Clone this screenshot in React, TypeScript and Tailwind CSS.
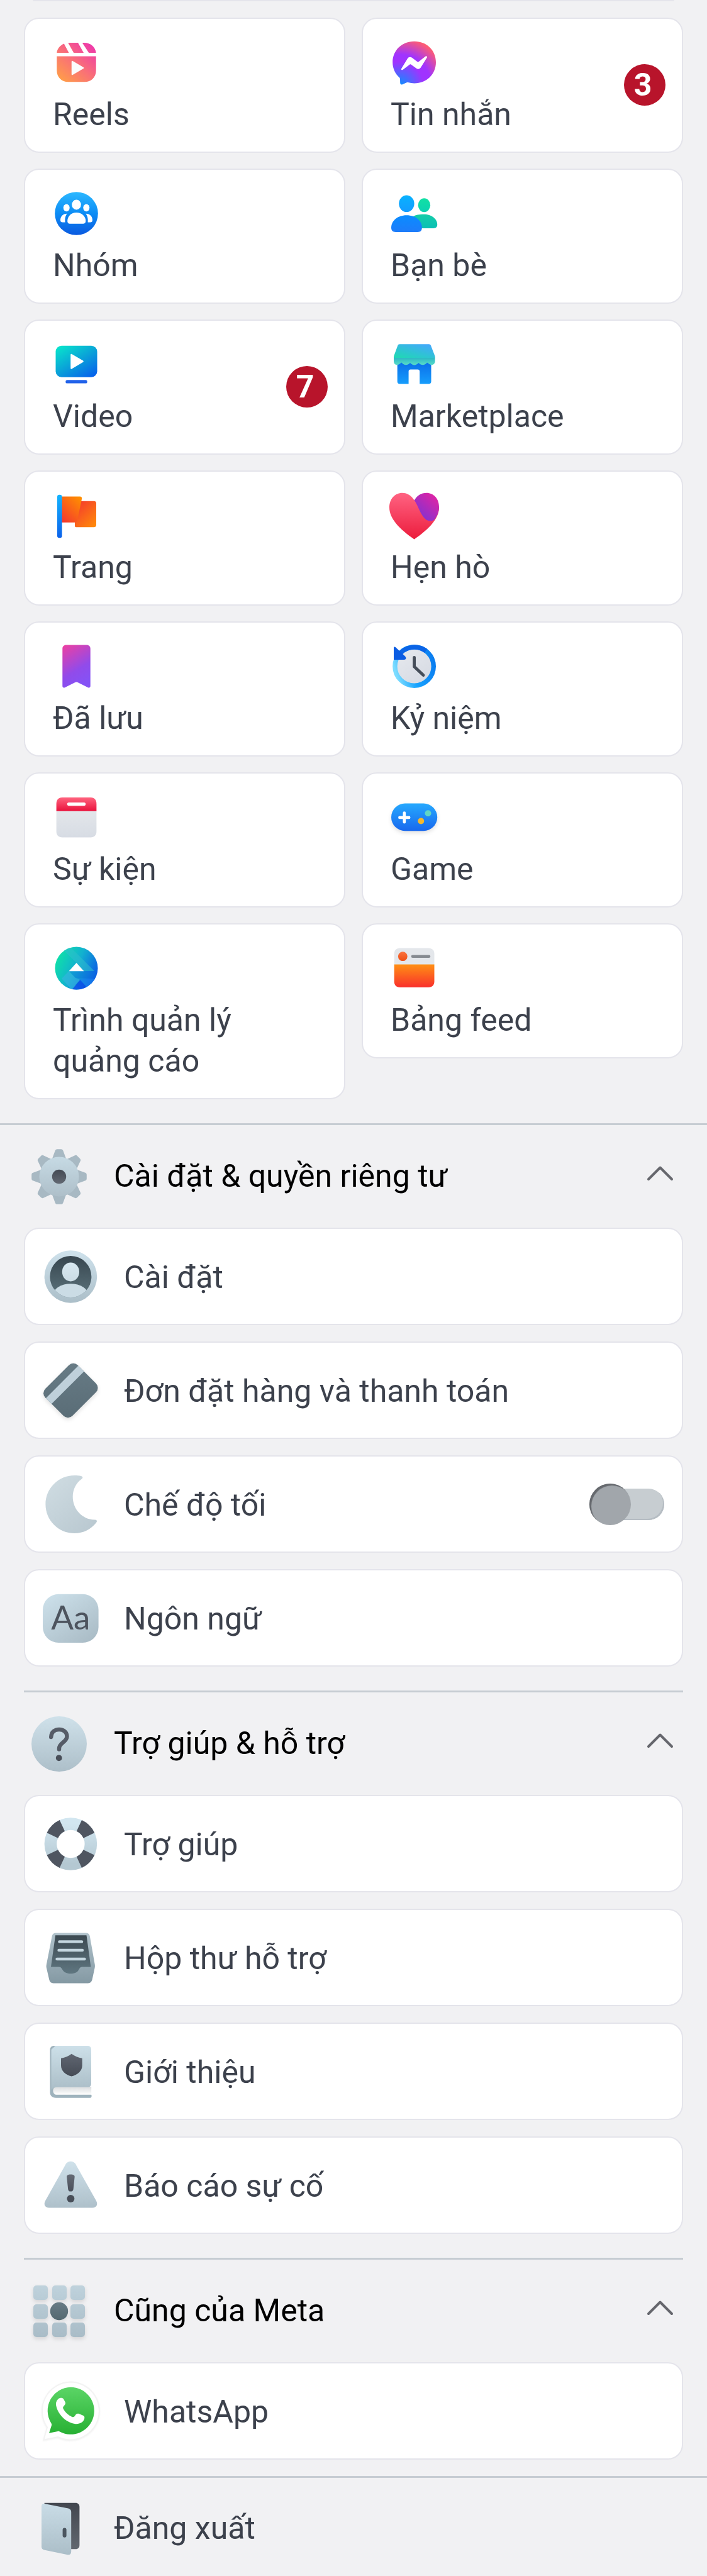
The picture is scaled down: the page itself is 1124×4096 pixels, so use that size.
import type { ReactNode } from "react";

type GradProps = { id: string; from: string; to: string; mid?: string; diag?: "v" | "up" | "down" };

function Grad({ id, from, to, mid, diag = "v" }: GradProps) {
  const pos = {
    v: { x1: 0, y1: 0, x2: 0, y2: 1 },
    up: { x1: 0.1, y1: 1, x2: 0.9, y2: 0 },
    down: { x1: 0.1, y1: 0, x2: 0.9, y2: 1 },
  }[diag];
  return (
    <linearGradient id={id} {...pos}>
      <stop offset="0" stopColor={from} />
      {mid && <stop offset="0.5" stopColor={mid} />}
      <stop offset="1" stopColor={to} />
    </linearGradient>
  );
}

function TileIcon({ children }: { children: ReactNode }) {
  return (
    <svg viewBox="0 0 76 76" className="block size-[76px] overflow-visible" aria-hidden="true">
      {children}
    </svg>
  );
}

function RowIcon({ children }: { children: ReactNode }) {
  return (
    <svg viewBox="0 0 88 88" className="block size-[88px] shrink-0 overflow-visible" aria-hidden="true">
      {children}
    </svg>
  );
}

const ReelsIcon = (
  <TileIcon>
    <defs>
      <linearGradient id="reels" gradientUnits="userSpaceOnUse" x1="12" y1="68" x2="62" y2="8">
        <stop offset="0" stopColor="#ffa046" />
        <stop offset="0.5" stopColor="#f96f78" />
        <stop offset="1" stopColor="#ee38ab" />
      </linearGradient>
    </defs>
    <path
      fill="url(#reels)"
      d="M6.3 22C7 15.500 11.500 10 17.800 7.500L25.500 22ZM24.200 6H40L49 22H33.200ZM46.800 6H50C60 6 67.500 12.500 68.700 22H57.200ZM6.300 27.500H68.700V50C68.700 61 61 68.300 50.500 68.300H24.500C14 68.300 6.300 61 6.300 50Z"
    />
    <path d="M31 36L48 46L31 56Z" fill="#fbfbfc" stroke="#fbfbfc" strokeWidth="2.500" strokeLinejoin="round" />
  </TileIcon>
);

const MessengerIcon = (
  <TileIcon>
    <defs>
      <radialGradient id="msgr" gradientUnits="userSpaceOnUse" cx="15" cy="74" r="76">
        <stop offset="0" stopColor="#0a90ff" />
        <stop offset="0.500" stopColor="#a033ff" />
        <stop offset="0.650" stopColor="#a033ff" />
        <stop offset="1" stopColor="#ff5c72" />
      </radialGradient>
    </defs>
    <path
      fill="url(#msgr)"
      d="M37.600 3.700C18 3.700 3.200 18 3.200 37C3.200 47 7.500 55.500 14 61.200C14.700 62 14.900 63 15 64L15.200 70C15.300 72 17 73 18.800 72.200L25.500 69.300C26.200 69 27 68.900 27.700 69.100C31 70 34.200 70.500 37.600 70.500C57.200 70.500 72 56.200 72 37S57.200 3.700 37.600 3.700Z"
    />
    <path
      fill="#fff"
      d="M17.200 47L27 31C28.500 28.400 31.500 28 34 29.700L42.300 36C43 36.500 44 36.500 44.800 36L55.600 27.600C57 26.500 58.700 28 57.800 29.600L48 45.300C46.400 48 43.300 48.500 41 46.800L32.700 40.700C32 40.200 31 40.200 30.200 40.700L19.300 49C17.800 50 16.200 48.600 17.200 47Z"
    />
  </TileIcon>
);

const GroupsIcon = (
  <TileIcon>
    <defs>
      <Grad id="groups" from="#2cb8ff" mid="#0c8cf5" to="#0a5ae0" />
    </defs>
    <circle cx="37.500" cy="37.500" r="34.300" fill="url(#groups)" />
    <g fill="#fff">
      <ellipse cx="37.500" cy="23.500" rx="7.300" ry="7.900" />
      <ellipse cx="21.700" cy="28.300" rx="5" ry="5.900" />
      <ellipse cx="53.300" cy="28.300" rx="5" ry="5.900" />
      <path d="M37.500 36C29 36 23.200 42 23.200 49.500C23.200 52.300 24.500 53.700 27 53.700H48C50.500 53.700 52.300 52.300 52.300 49.500C52.300 42 46 36 37.500 36Z" />
      <path d="M22.600 37.700C16 37.700 12 42.500 12 48C12 50.500 13.200 51.500 15.500 51.500H19.600C19 46 19.500 42 22.600 37.700Z" />
      <path d="M52.400 37.700C59 37.700 63 42.500 63 48C63 50.500 61.800 51.500 59.500 51.500H55.600C56 46 55.500 42 52.400 37.700Z" />
    </g>
  </TileIcon>
);

const FriendsIcon = (
  <TileIcon>
    <defs>
      <Grad id="fr1" from="#08b2ff" to="#149cff" />
      <Grad id="fr2" from="#0a8cff" to="#1e7cfa" />
      <Grad id="fr3" from="#12e0a4" to="#0cd2b2" />
      <Grad id="fr4" from="#14cda8" to="#0abfb4" />
    </defs>
    <ellipse cx="53.400" cy="24.200" rx="9.700" ry="11" fill="url(#fr3)" />
    <path fill="url(#fr4)" d="M53 38.700C65 38.700 74.200 46 74.200 55C74.200 59 72 60.900 68 60.900H36V42C40 39.700 45 38.700 53 38.700Z" />
    <ellipse cx="25.400" cy="21.800" rx="12.200" ry="13.300" fill="url(#fr1)" />
    <path fill="url(#fr2)" d="M25.400 40.200C11 40.200 1 49 1 60C1 64.500 3.500 66.900 8 66.900H43C47.500 66.900 49.800 64.500 49.800 60C49.800 49 40 40.200 25.400 40.200Z" />
  </TileIcon>
);

const VideoIcon = (
  <TileIcon>
    <defs>
      <Grad id="vid" from="#08e4cc" mid="#0aa2d8" to="#0660ec" diag="down" />
    </defs>
    <rect x="4.500" y="7.700" width="66" height="50" rx="9.500" fill="url(#vid)" />
    <path d="M29.500 22L47.500 32.600L29.500 43.500Z" fill="#fff" stroke="#fff" strokeWidth="2.500" strokeLinejoin="round" />
    <rect x="20.300" y="62.300" width="34.400" height="5.200" rx="2.600" fill="#2162ea" />
  </TileIcon>
);

const PagesIcon = (
  <TileIcon>
    <defs>
      <Grad id="pole" from="#12b4ff" to="#0c62ea" />
      <Grad id="flag1" from="#f4392e" to="#ff9000" diag="up" />
      <Grad id="flag2" from="#f4392e" to="#ff8a0a" diag="down" />
    </defs>
    <path fill="url(#flag2)" d="M44 14.800H65.500C67.800 14.800 69 16 69 18.300V52.700C69 55 67.800 56.200 65.500 56.200H37C35.500 56.200 34.700 55 35 53.500V48.500Z" />
    <path fill="url(#flag1)" d="M14 7.600H43C45.500 7.600 46.500 9 46 11.500L39 45C38.400 47.700 37 48.700 34.500 48.700H14Z" />
    <rect x="7" y="4.800" width="7.600" height="68.400" rx="3.300" fill="url(#pole)" />
  </TileIcon>
);

const MarketIcon = (
  <TileIcon>
    <defs>
      <Grad id="mk1" from="#1fd8b4" to="#45a6ff" diag="up" />
      <Grad id="mk2" from="#0a6ce8" to="#169dfc" />
      <Grad id="mk3" from="#24b2c4" to="#58dcc8" />
    </defs>
    <path fill="url(#mk2)" d="M10.700 32H64.500V64.500C64.500 67.200 63 68.600 60.500 68.600H46.200V48.500C46.200 46.500 45 45.400 43 45.400H31.800C29.800 45.400 28.600 46.500 28.600 48.500V68.600H14.700C12.200 68.600 10.700 67.200 10.700 64.500Z" />
    <path
      fill="url(#mk3)"
      d="M5 25H70.600V32C70.600 37.500 66 39.500 62.500 37.500L58 34.500C54 39.500 49 39.500 44.500 35C40 39.500 35.500 39.500 31 35C26.500 39.500 21.500 39.500 17.500 34.500L13 37.500C9 39.500 5 37.500 5 32Z"
    />
    <path fill="url(#mk1)" d="M14.500 5.200H60.800C62.500 5.200 63.500 6 64 7.500L70.200 23.500C70.800 25.500 70.500 27 68 27H7.500C5.200 27 4.800 25.500 5.400 23.500L11.300 7.500C11.800 6 12.800 5.200 14.500 5.200Z" />
  </TileIcon>
);

const DatingIcon = (
  <TileIcon>
    <defs>
      <Grad id="ht1" from="#ff6382" to="#ec1c3c" />
      <Grad id="ht2" from="#7434d8" to="#e822a0" diag="up" />
    </defs>
    <path fill="url(#ht1)" d="M37.600 75.500C13 58.500-2 42-2 25C-2 11 7 1.700 18.500 1.700C27 1.700 33.500 6.500 37.600 13.600L77 25C77 42 62.200 58.500 37.600 75.500Z" />
    <path fill="url(#ht2)" d="M37.600 13.600C42 6 48.500 1.700 57 1.700C68.500 1.700 77 11 77 24C77 31.500 74.200 38 69.500 44.500C64 48 57 46.500 52.500 40.500C45.500 31.500 44 22.500 37.600 13.600Z" />
  </TileIcon>
);

const SavedIcon = (
  <TileIcon>
    <defs>
      <linearGradient id="saved" x1="0.100" y1="0" x2="0.500" y2="1">
        <stop offset="0" stopColor="#ea40a4" />
        <stop offset="0.650" stopColor="#914bea" />
        <stop offset="1" stopColor="#8552f5" />
      </linearGradient>
    </defs>
    <path fill="url(#saved)" d="M21.500 3.600H53.500C57.500 3.600 59.700 6 59.700 9.500V69C59.700 71 58 72 56 71.200L39.500 63C38.200 62.300 36.800 62.300 35.500 63L19 71.200C17 72 15.300 71 15.300 69V9.500C15.300 6 17.500 3.600 21.500 3.600Z" />
  </TileIcon>
);

const MemoriesIcon = (
  <TileIcon>
    <defs>
      <Grad id="memface" from="#e6e9ee" to="#d5d9e2" diag="down" />
      <linearGradient id="memring" x1="0" y1="0.600" x2="1" y2="0.300">
        <stop offset="0" stopColor="#7cdcff" />
        <stop offset="0.400" stopColor="#18a4ff" />
        <stop offset="1" stopColor="#0a7df0" />
      </linearGradient>
    </defs>
    <circle cx="37.600" cy="37.500" r="28" fill="url(#memface)" />
    <circle cx="37.600" cy="37.500" r="30.700" fill="none" stroke="url(#memring)" strokeWidth="7.400" />
    <path d="M13 19.500A30.700 30.700 0 0 1 56 13" fill="none" stroke="#0b64e6" strokeWidth="7.400" />
    <path d="M5 8.500C5 6.500 6.700 6 8 7.200L23 21.500C25.500 24 24.500 26.900 21.500 26.900H5Z" fill="#0b5ce2" />
    <path d="M37.600 23.500V38L52 51.500" fill="none" stroke="#454d59" strokeWidth="4.800" strokeLinecap="round" strokeLinejoin="round" />
  </TileIcon>
);

const EventsIcon = (
  <TileIcon>
    <defs>
      <Grad id="evt" from="#ff637e" to="#e9123c" />
      <Grad id="evb" from="#e3e6ea" to="#d7dce4" />
    </defs>
    <path fill="url(#evb)" d="M5.600 27H69.400V60C69.400 66 66 69.400 60 69.400H15C9 69.400 5.600 66 5.600 60Z" />
    <path fill="url(#evt)" d="M5.600 27.800V16C5.600 10 9 6 15 6H60C66 6 69.400 10 69.400 16V27.800Z" />
    <rect x="22.800" y="13.900" width="29.400" height="5.300" rx="2.600" fill="#fff" />
  </TileIcon>
);

const GameIcon = (
  <TileIcon>
    <defs>
      <Grad id="game" from="#26a9fe" to="#1868ee" />
    </defs>
    <g className="drop-shadow-md">
      <rect x="1" y="15.600" width="73.200" height="43.600" rx="21.800" fill="url(#game)" />
    </g>
    <path d="M21.800 30.500V45.300M14.400 37.900H29.200" stroke="#fff" strokeWidth="4.600" strokeLinecap="round" />
    <circle cx="59.500" cy="31.300" r="5" fill="#62d6c4" />
    <circle cx="48.300" cy="43.500" r="5" fill="#f5b82e" />
  </TileIcon>
);

const AdsIcon = (
  <TileIcon>
    <defs>
      <linearGradient id="ads" gradientUnits="userSpaceOnUse" x1="8" y1="24" x2="70" y2="54">
        <stop offset="0" stopColor="#0fdcac" />
        <stop offset="0.450" stopColor="#12b0d0" />
        <stop offset="1" stopColor="#0b55e6" />
      </linearGradient>
      <clipPath id="adsclip">
        <circle cx="37.500" cy="37.500" r="34" />
      </clipPath>
    </defs>
    <g clipPath="url(#adsclip)">
      <rect width="76" height="76" fill="url(#ads)" />
      <path d="M12 4L37.500 29L49.500 42H66L28 4Z" fill="#2fc0cc" opacity="0.550" />
      <path d="M25.500 42H66L72 53H36Z" fill="#0b74dc" opacity="0.350" />
      <path d="M25.500 42L14 54L34 76H46L36 64L43.400 56L36 53Z" fill="#3cb4e2" opacity="0.550" />
      <path d="M43.400 56L58 72H30Z" fill="#0a4fe8" opacity="0.850" />
      <path d="M43.400 56L58 72H72V54H45Z" fill="#1a84ee" opacity="0.600" />
    </g>
    <path d="M25.500 42.300L37.500 29L49.500 42.300Z" fill="#fff" />
  </TileIcon>
);

const FeedsIcon = (
  <TileIcon>
    <defs>
      <Grad id="feed" from="#ff9014" to="#f9302c" />
      <Grad id="feeddot" from="#fb7440" to="#ee4e14" />
    </defs>
    <path fill="#e4e7eb" d="M5.700 32V15C5.700 9 9 5.500 15 5.500H60C66 5.500 69.500 9 69.500 15V32Z" />
    <path fill="url(#feed)" d="M5.700 31.400H69.500V58.500C69.500 64.500 66 67.900 60 67.900H15C9 67.900 5.700 64.500 5.700 58.500Z" />
    <circle cx="19.300" cy="18.700" r="7.400" fill="url(#feeddot)" />
    <path d="M35 18.700H61" stroke="#858a90" strokeWidth="4.600" strokeLinecap="round" />
  </TileIcon>
);

const GearIcon = (
  <RowIcon>
    <defs>
      <Grad id="gear" from="#c6dae4" to="#aebfc9" />
      <Grad id="gearhole" from="#444a54" to="#626872" />
    </defs>
    <g fill="#a8b9c3">
      {[0, 45, 90, 135, 180, 225, 270, 315].map((angle) => (
        <path
          key={angle}
          d="M32 18L37.500 3C38.100 1 39.300 0.200 41 0.200H47C48.700 0.200 49.900 1 50.500 3L56 18Z"
          transform={`rotate(${angle} 44 44)`}
        />
      ))}
    </g>
    <circle cx="44" cy="44" r="31.500" fill="url(#gear)" />
    <circle cx="44" cy="44" r="11.200" fill="url(#gearhole)" />
  </RowIcon>
);

const AccountIcon = (
  <RowIcon>
    <defs>
      <Grad id="acc" from="#cfe2ec" to="#abbec8" />
      <Grad id="accd" from="#37464f" to="#5c737c" />
      <Grad id="acch" from="#d8e8f0" to="#cbdce5" />
      <clipPath id="accclip">
        <circle cx="44.400" cy="44" r="33" />
      </clipPath>
    </defs>
    <circle cx="44.400" cy="44" r="41.800" fill="url(#acc)" />
    <circle cx="44.400" cy="44" r="33" fill="url(#accd)" />
    <ellipse cx="44.400" cy="36.400" rx="13.600" ry="15" fill="url(#acch)" />
    <ellipse cx="44.400" cy="73" rx="28" ry="17.800" fill="#cbdce5" clipPath="url(#accclip)" />
  </RowIcon>
);

const CardIcon = (
  <RowIcon>
    <defs>
      <linearGradient id="ccard" x1="1" y1="0" x2="0" y2="1">
        <stop offset="0" stopColor="#687c86" />
        <stop offset="1" stopColor="#596c76" />
      </linearGradient>
    </defs>
    <g className="drop-shadow-md">
      <g transform="translate(44.300 44) rotate(-45)">
        <rect x="-36.500" y="-30.500" width="73" height="61" rx="10" fill="url(#ccard)" />
        <rect x="-36.500" y="-19.200" width="73" height="12.800" fill="#bfd0da" />
      </g>
    </g>
  </RowIcon>
);

const MoonIcon = (
  <RowIcon>
    <defs>
      <Grad id="moon" from="#cfdce2" to="#b9c8d0" diag="down" />
    </defs>
    <path fill="url(#moon)" d="M61 -1C64 0 64.200 2 61.500 4C52.500 10.500 47.700 21 47.700 32C47.700 52 63 68 82 68.500C86 68.500 87 70 85 73C77 83.500 64.500 90 50.400 90C25 90 4.400 69.500 4.400 44S25-2 50.400-2C54-2 58-1.800 61-1Z" />
  </RowIcon>
);

const LanguageIcon = (
  <RowIcon>
    <defs>
      <Grad id="lang" from="#cce0ea" to="#a9bbc5" diag="down" />
    </defs>
    <rect x="0" y="5.800" width="88.600" height="77.200" rx="25" fill="url(#lang)" />
    <text x="44.300" y="62" textAnchor="middle" fontSize="53" fill="#4d545e" className="font-[Lato,sans-serif]">
      Aa
    </text>
  </RowIcon>
);

const QuestionIcon = (
  <RowIcon>
    <defs>
      <Grad id="qst" from="#cfe1ea" to="#adbfc9" />
    </defs>
    <circle cx="44" cy="44" r="44" fill="url(#qst)" />
    <path d="M31.200 33C31.500 25 37 21 44 21C51.500 21 56.500 25.500 56.500 32C56.500 41 44 42 44 51V52.500" fill="none" stroke="#565c67" strokeWidth="6.400" strokeLinecap="round" />
    <circle cx="43.700" cy="66.300" r="4.900" fill="#484e58" />
  </RowIcon>
);

const LifebuoyIcon = (
  <RowIcon>
    <defs>
      <Grad id="buoy" from="#d2e6f0" to="#b4c8d2" />
    </defs>
    <circle cx="44.400" cy="44" r="32" fill="none" stroke="url(#buoy)" strokeWidth="19.600" />
    <circle cx="44.400" cy="44" r="32" fill="none" stroke="#4f5560" strokeWidth="19.600" pathLength="360" strokeDasharray="40 50" strokeDashoffset="-25" />
  </RowIcon>
);

const InboxIcon = (
  <RowIcon>
    <defs>
      <Grad id="inb" from="#b0c2cb" to="#8499a3" />
      <Grad id="inbd" from="#3c4951" to="#5f7680" />
    </defs>
    <path fill="url(#inb)" d="M21 4.400H68.500C72 4.400 74 6 74.800 9.500L82.800 55C83 57 83 58.500 82.500 60.500L78.500 79C77.500 82.500 75.500 84.400 72 84.400H16.800C13.300 84.400 11 82.500 10.300 79L6 60.500C5.500 58.500 5.500 57 5.800 55L14.700 9.500C15.500 6 17.500 4.400 21 4.400Z" />
    <path fill="url(#inbd)" d="M20.100 8.300H69.500L76.400 58.400H63C60 58.400 58.500 60 57.500 62.500C55.500 67 51 69.300 44.400 69.300S33.500 67 31 62.500C29.700 60 28.500 58.400 25.500 58.400H13Z" />
    <g stroke="#c4d6df" strokeWidth="4.400" strokeLinecap="round">
      <path d="M26.500 18.400H62" />
      <path d="M25.500 32H63" />
      <path d="M22.500 46H66.500" />
    </g>
  </RowIcon>
);

const BookIcon = (
  <RowIcon>
    <defs>
      <Grad id="book" from="#cde0e9" to="#aabdc7" />
      <Grad id="pages" from="#d9dcde" to="#ffffff" />
      <Grad id="shield" from="#606671" to="#454b55" />
    </defs>
    <path fill="#9fb3bd" d="M17.500 2.900H30V70H77V80.600C78 82 78 84.500 76 85.700H21C15 85.700 11.500 82 11.500 77V9C11.500 5.500 14 2.900 17.500 2.900Z" />
    <path fill="url(#pages)" d="M22 68H77.200V80.800H22C14.500 80.800 14.500 68 22 68Z" />
    <path fill="url(#book)" d="M20 2.900H71C75 2.900 77 5 77 9V63C77 66.700 75 68.800 71 68.800H24C19 68.800 15.500 70 13.500 73V9Z" />
    <path fill="url(#shield)" d="M45.800 15.800C51 19.500 56 21.500 62.700 22.800V34C62.700 43 55.500 49 45.800 51.500C36 49 29 43 29 34V22.800C35.500 21.500 41 19.500 45.800 15.800Z" />
  </RowIcon>
);

const WarningIcon = (
  <RowIcon>
    <defs>
      <Grad id="warn" from="#cfe1ea" to="#aec0ca" />
      <Grad id="bang" from="#646a74" to="#4a505b" />
    </defs>
    <path fill="url(#warn)" d="M44.400 5.700C48 5.700 50.500 7.300 52.300 10.300L85 68.500C88.200 74.300 85.200 79.500 79 79.500H10C3.700 79.500 0.800 74.300 4 68.500L36.500 10.300C38.300 7.300 40.800 5.700 44.400 5.700Z" />
    <path fill="url(#bang)" d="M44.400 26.500C49 26.500 51.200 28 50.600 31L48.600 50C48.200 52.500 47 53.600 44.400 53.600S40.600 52.500 40.200 50L38.200 31C37.600 28 39.800 26.500 44.400 26.500Z" />
    <circle cx="44.400" cy="64.900" r="6" fill="#484e58" />
  </RowIcon>
);

const GridIcon = (
  <RowIcon>
    <defs>
      <linearGradient id="cells" gradientUnits="userSpaceOnUse" x1="0" y1="3" x2="0" y2="85">
        <stop offset="0" stopColor="#bfd2dc" />
        <stop offset="1" stopColor="#a9bcc7" />
      </linearGradient>
      <Grad id="dot" from="#687b85" to="#546870" />
    </defs>
    <g fill="url(#cells)" className="drop-shadow-md">
      {[3, 33, 62].map((y) =>
        [3, 33, 62].map((x) => <rect key={`${x}-${y}`} x={x} y={y} width="23" height="23" rx="5" />),
      )}
    </g>
    <circle cx="44" cy="44" r="14.200" fill="url(#dot)" />
  </RowIcon>
);

const WhatsAppIcon = (
  <RowIcon>
    <defs>
      <Grad id="wa" from="#5bd566" to="#27b033" />
    </defs>
    <g className="drop-shadow-xs">
      <path
        fill="#fff"
        stroke="#f3f3f3"
        strokeWidth="2"
        d="M44.300 -2.500A46 46 0 1 1 24 85L1.500 89.500L7 69.500A46 46 0 0 1 44.300 -2.500Z"
      />
    </g>
    <path fill="url(#wa)" d="M44.300 5.800A37.500 37.500 0 1 1 26.500 76.300C25.500 75.800 24.800 75.700 23.800 75.900L10 78.800L14 66.500C14.300 65.500 14.200 64.500 13.500 63.300A37.500 37.500 0 0 1 44.300 5.800Z" />
    <path
      fill="#fff"
      d="M24.500 24.500C21.500 27.500 20.300 31 21.200 35C24 49 37 62 51 64C58 65 65.500 61.500 66.300 55C66.500 53 66 51.800 64.500 51L57.500 48C55 47.200 53.500 48 52 50C50.500 52.500 49 54 46.500 53C40 50 35.500 45.500 32.500 40C31.500 38 32.500 36.500 34.500 34.500C36 33 36.500 31.500 35.700 29.500L33 24.500C31.500 22 27 22 24.500 24.500Z"
    />
  </RowIcon>
);

const DoorIcon = (
  <RowIcon>
    <defs>
      <Grad id="frame" from="#43474f" to="#61676f" />
      <Grad id="door" from="#c9dce6" to="#abbec8" />
    </defs>
    <path fill="url(#frame)" d="M20.600 3.800H70C74 3.800 76.400 6.200 76.400 10V71C76.400 75 74 77.300 70 77.300H20.600Z" />
    <path fill="url(#door)" d="M20.500 5L58.500 12.500C61.500 13.200 63.200 15 63.200 18V81C63.200 85 61 87 57.500 86.200L20 78.500C17.500 78 16 76 16 73.500V9C16 6 17.800 4.400 20.500 5Z" />
    <rect x="49.600" y="43.600" width="6" height="15.200" rx="3" fill="#4c5660" />
  </RowIcon>
);

type Tile = { label: ReactNode; icon: ReactNode; badge?: number };

const tiles: Tile[] = [
  { label: "Reels", icon: ReelsIcon },
  { label: "Tin nhắn", icon: MessengerIcon, badge: 3 },
  { label: "Nhóm", icon: GroupsIcon },
  { label: "Bạn bè", icon: FriendsIcon },
  { label: "Video", icon: VideoIcon, badge: 7 },
  { label: "Marketplace", icon: MarketIcon },
  { label: "Trang", icon: PagesIcon },
  { label: "Hẹn hò", icon: DatingIcon },
  { label: "Đã lưu", icon: SavedIcon },
  { label: "Kỷ niệm", icon: MemoriesIcon },
  { label: "Sự kiện", icon: EventsIcon },
  { label: "Game", icon: GameIcon },
  { label: <>Trình quản lý<br />quảng cáo</>, icon: AdsIcon },
  { label: "Bảng feed", icon: FeedsIcon },
];

function TileCard({ label, icon, badge }: Tile) {
  return (
    <a href="#" className="relative block rounded-3xl border-2 border-[#e4e4eb] bg-white px-[44px] pt-8 pb-[26px]">
      {icon}
      <span className="mt-3 block">{label}</span>
      {badge !== undefined && (
        <span className="absolute top-[72px] right-[26px] flex size-[66px] items-center justify-center rounded-full bg-[#b8142b] pr-1.5 font-bold text-white">
          {badge}
        </span>
      )}
    </a>
  );
}

const rowClass = "flex h-[155px] items-center gap-[41px] rounded-3xl border-2 border-[#e4e4eb] bg-white pr-7 pl-7";

function RowLink({ label, icon }: { label: string; icon: ReactNode }) {
  return (
    <a href="#" className={rowClass}>
      {icon}
      <span className="pt-1">{label}</span>
    </a>
  );
}

function DarkModeRow() {
  return (
    <label htmlFor="dark-mode" className={rowClass}>
      {MoonIcon}
      <span className="flex-1 pt-1">Chế độ tối</span>
      <input
        id="dark-mode"
        type="checkbox"
        role="switch"
        className="relative h-[66px] w-[119px] shrink-0 appearance-none before:absolute before:top-2 before:right-0 before:h-[50px] before:w-[110px] before:rounded-full before:bg-[#c7cdd1] before:shadow-[inset_-2px_-2px_0_#b6bdc3] after:absolute after:top-0 after:left-0 after:size-[66px] after:rounded-full after:bg-[#a1a6ab] after:shadow-[inset_3px_3px_1px_#66696e] checked:after:left-[53px]"
      />
    </label>
  );
}

function Section({ title, icon, children }: { title: string; icon: ReactNode; children: ReactNode }) {
  return (
    <>
      <h2>
        <button type="button" aria-expanded="true" className="flex h-[163px] w-full items-center gap-[43px] pr-3 pl-3 text-left text-black">
          {icon}
          <span className="flex-1">{title}</span>
          <svg viewBox="0 0 48 48" className="size-12" fill="none" stroke="#66676d" strokeWidth="4" strokeLinecap="round" strokeLinejoin="round" aria-hidden="true">
            <path d="M5 28L23.500 9.500L42 28" />
          </svg>
        </button>
      </h2>
      <div className="flex flex-col gap-[26px]">{children}</div>
    </>
  );
}

function Rule() {
  return <hr className="h-[3px] border-0 bg-[#c6ccd2]" />;
}

export default function App() {
  return (
    <main className="bg-[#f1f1f3] font-[Roboto,sans-serif] text-[50px] leading-[65px] text-[#3c414c]">
      <div className="mx-[52px] h-0.5 rounded-full bg-[#e4e4eb]" />
      <nav className="grid grid-cols-2 items-start gap-x-[26px] gap-y-[25px] px-[38px] pt-[26px] pb-[38px]">
        {tiles.map((tile, i) => (
          <TileCard key={i} {...tile} />
        ))}
      </nav>
      <Rule />
      <div className="flex flex-col gap-[38px] px-[38px] pb-[26px]">
        <section>
          <Section title="Cài đặt & quyền riêng tư" icon={GearIcon}>
            <RowLink label="Cài đặt" icon={AccountIcon} />
            <RowLink label="Đơn đặt hàng và thanh toán" icon={CardIcon} />
            <DarkModeRow />
            <RowLink label="Ngôn ngữ" icon={LanguageIcon} />
          </Section>
        </section>
        <section>
          <Rule />
          <Section title="Trợ giúp & hỗ trợ" icon={QuestionIcon}>
            <RowLink label="Trợ giúp" icon={LifebuoyIcon} />
            <RowLink label="Hộp thư hỗ trợ" icon={InboxIcon} />
            <RowLink label="Giới thiệu" icon={BookIcon} />
            <RowLink label="Báo cáo sự cố" icon={WarningIcon} />
          </Section>
        </section>
        <section>
          <Rule />
          <Section title="Cũng của Meta" icon={GridIcon}>
            <RowLink label="WhatsApp" icon={WhatsAppIcon} />
          </Section>
        </section>
      </div>
      <Rule />
      <button type="button" className="flex h-[156px] w-full items-center gap-[43px] px-[50px] pt-1 text-left">
        {DoorIcon}
        <span>Đăng xuất</span>
      </button>
    </main>
  );
}
